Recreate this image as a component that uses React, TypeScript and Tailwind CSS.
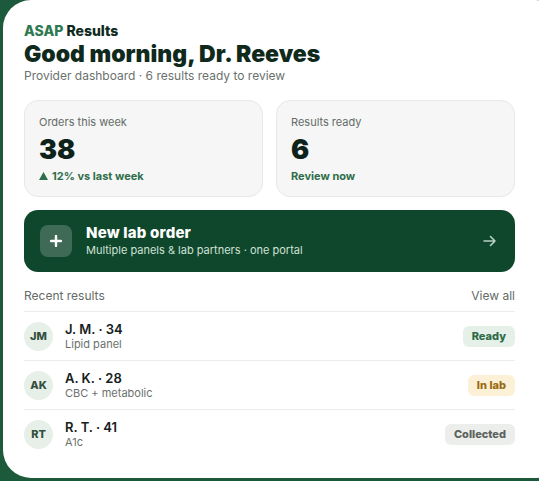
import React from 'react';

type Status = 'Ready' | 'In lab' | 'Collected';

interface ResultRow {
  initials: string;
  name: string;
  panel: string;
  status: Status;
}

const RESULTS: ResultRow[] = [
  { initials: 'JM', name: 'J. M. · 34', panel: 'Lipid panel', status: 'Ready' },
  { initials: 'AK', name: 'A. K. · 28', panel: 'CBC + metabolic', status: 'In lab' },
  { initials: 'RT', name: 'R. T. · 41', panel: 'A1c', status: 'Collected' },
];

const statusStyles: Record<Status, string> = {
  Ready: 'bg-[#e4f0e8] text-[#2f6a47]',
  'In lab': 'bg-[#fcf0d6] text-[#9a6a14]',
  Collected: 'bg-[#eceeec] text-[#5b625d]',
};

const display = "font-['Inter','Liberation_Sans',sans-serif]";

const StatCard: React.FC<{ label: string; value: string; children: React.ReactNode }> = ({ label, value, children }) => (
  <div className="h-[97px] flex-1 rounded-[14px] border border-[#e6e9e7] bg-[#f5f6f5] px-[14px] pt-[13px]">
    <p className="text-[11px] leading-4 text-[#646b67]">{label}</p>
    <p className={`${display} mt-[4px] text-[27px] leading-8 font-black text-[#0d231a]`}>{value}</p>
    <div className="mt-[2px] text-[11px] leading-4 font-bold text-[#2f6e4a]">{children}</div>
  </div>
);

const App: React.FC = () => {
  return (
    <div className="h-[481px] w-[539px] overflow-hidden bg-[#1d5a3b] pl-[3px] font-['Inter','Liberation_Sans',sans-serif]">
      <div className="h-[478px] w-[560px] rounded-[28px] bg-white pt-[22px] pl-[21px] pr-[45px]">
        <div className="w-[491px]">
          {/* brand + greeting */}
          <p className={`${display} text-[14px] leading-[18px] font-extrabold text-[#0f2a1d]`}>
            <span className="text-[#2f7a52]">ASAP</span> Results
          </p>
          <h1 className={`${display} text-[23px] leading-7 font-black text-[#0f2a1d]`}>
            Good morning, Dr. Reeves
          </h1>
          <p className="text-[12px] leading-4 text-[#6b716d]">
            Provider dashboard · 6 results ready to review
          </p>

          {/* weekly stats */}
          <div className="mt-[16px] flex gap-[13px]">
            <StatCard label="Orders this week" value="38">
              <span className="inline-flex items-center gap-[4px]">
                <svg width="9" height="8" viewBox="0 0 9 8">
                  <path d="M4.5 0L9 8H0z" fill="#2f6e4a" />
                </svg>
                12% vs last week
              </span>
            </StatCard>
            <StatCard label="Results ready" value="6">
              Review now
            </StatCard>
          </div>

          {/* primary action */}
          <button className="mt-[13px] flex h-[62px] w-full items-center rounded-[14px] bg-[#0f472c] pl-[16px] pr-[18px] text-left">
            <span className="flex h-[32px] w-[32px] items-center justify-center rounded-[8px] bg-white/20">
              <svg width="12" height="12" viewBox="0 0 12 12">
                <path d="M6 1v10M1 6h10" stroke="white" strokeWidth="2.4" strokeLinecap="round" />
              </svg>
            </span>
            <span className="ml-[14px] flex-1">
              <span className={`${display} block text-[15px] leading-[18px] font-extrabold tracking-[0.2px] text-white`}>New lab order</span>
              <span className="block text-[11px] leading-4 text-[#cfe1d6]">Multiple panels &amp; lab partners · one portal</span>
            </span>
            <svg width="14" height="12" viewBox="0 0 14 12" fill="none">
              <path d="M1 6h11M7.5 1.5L12 6l-4.5 4.5" stroke="#b9d0c2" strokeWidth="1.6" strokeLinecap="round" strokeLinejoin="round" />
            </svg>
          </button>

          {/* recent results */}
          <div className="mt-[16px] flex items-center justify-between pb-[7px]">
            <span className="text-[12px] leading-4 text-[#646b67]">Recent results</span>
            <span className="text-[12px] leading-4 text-[#646b67]">View all</span>
          </div>
          <ul>
            {RESULTS.map((r) => (
              <li key={r.initials} className="flex h-[49px] items-center border-t border-[#eceeec]">
                <span className={`${display} flex h-[29px] w-[29px] items-center justify-center rounded-full bg-[#e7efe9] text-[11px] font-extrabold text-[#33503f]`}>
                  {r.initials}
                </span>
                <div className="ml-[12px] flex-1">
                  <p className="text-[13px] leading-4 font-semibold text-[#15201a]">{r.name}</p>
                  <p className="text-[11px] leading-[14px] text-[#6b716d]">{r.panel}</p>
                </div>
                <span className={`${display} rounded-[6px] px-[9px] py-[3px] text-[11px] leading-[15px] font-extrabold ${statusStyles[r.status]}`}>
                  {r.status}
                </span>
              </li>
            ))}
          </ul>
        </div>
      </div>
    </div>
  );
};

export default App;
